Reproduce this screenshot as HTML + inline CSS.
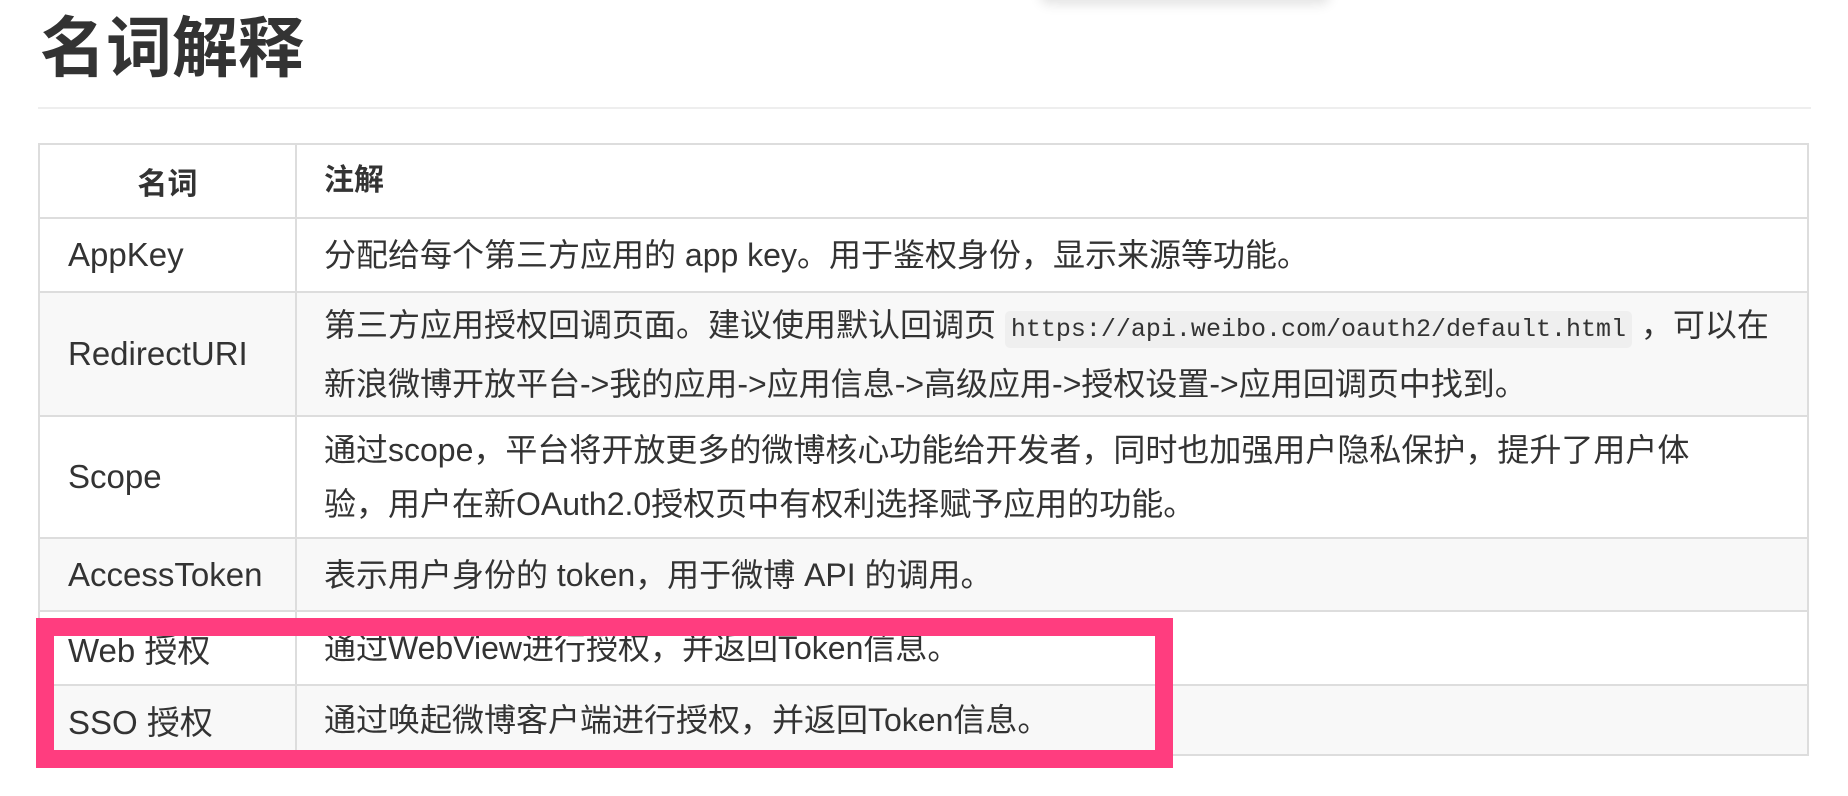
<!DOCTYPE html>
<html><head><meta charset="utf-8"><style>
body{margin:0;width:1848px;height:796px;background:#fff;position:relative;overflow:hidden;font-family:"Liberation Sans","Noto Sans CJK SC",sans-serif;color:#333}
.t{position:absolute;left:40px;top:8px;font-size:66px;font-weight:bold;line-height:80px;color:#333}
.hr{position:absolute;left:38px;width:1773px;top:107px;height:2px;background:#eee}
.r{position:absolute;left:38px;width:1771px;border:2px solid #ddd;border-bottom:none;box-sizing:border-box}
.c1,.c2{position:absolute;top:0;bottom:0;display:flex;align-items:center;box-sizing:border-box}
.c1{left:0;width:255px;padding-left:28px;font-size:33px}
.c2{left:255px;right:0;padding-left:27px;border-left:2px solid #ddd;font-size:32px;line-height:54px;white-space:nowrap}
.g{background:#f8f8f8}
code{font-family:"Liberation Mono",monospace;font-size:25px;background:#efefef;border-radius:5px;padding:4px 6px}
.pk{position:absolute;left:36px;top:618px;width:1137px;height:150px;border:18px solid #ff3d7f;box-sizing:border-box}
.sh{position:absolute;left:1040px;top:-20px;width:290px;height:20px;box-shadow:0 4px 12px rgba(0,0,0,.12);border-radius:10px}
</style></head><body>
<div class="sh"></div>
<div class="t">名词解释</div>
<div class="hr"></div>
<div class="r" style="top:143px;height:74px"><div class="c1" style="justify-content:center;padding:0;font-weight:bold;font-size:30px">名词</div><div class="c2" style="font-weight:bold;font-size:30px">注解</div></div>
<div class="r" style="top:217px;height:74px"><div class="c1">AppKey</div><div class="c2">分配给每个第三方应用的 app key。用于鉴权身份，显示来源等功能。</div></div>
<div class="r g" style="top:291px;height:124px"><div class="c1">RedirectURI</div><div class="c2"><div>第三方应用授权回调页面。建议使用默认回调页 <code>https://api.weibo.com/oauth2/default.html</code> ，可以在<br>新浪微博开放平台-&gt;我的应用-&gt;应用信息-&gt;高级应用-&gt;授权设置-&gt;应用回调页中找到。</div></div></div>
<div class="r" style="top:415px;height:122px"><div class="c1">Scope</div><div class="c2"><div>通过scope，平台将开放更多的微博核心功能给开发者，同时也加强用户隐私保护，提升了用户体<br>验，用户在新OAuth2.0授权页中有权利选择赋予应用的功能。</div></div></div>
<div class="r g" style="top:537px;height:73px"><div class="c1">AccessToken</div><div class="c2">表示用户身份的 token，用于微博 API 的调用。</div></div>
<div class="r" style="top:610px;height:74px"><div class="c1">Web 授权</div><div class="c2">通过WebView进行授权，并返回Token信息。</div></div>
<div class="r g" style="top:684px;height:72px;border-bottom:2px solid #ddd"><div class="c1">SSO 授权</div><div class="c2">通过唤起微博客户端进行授权，并返回Token信息。</div></div>
<div class="pk"></div>
</body></html>
